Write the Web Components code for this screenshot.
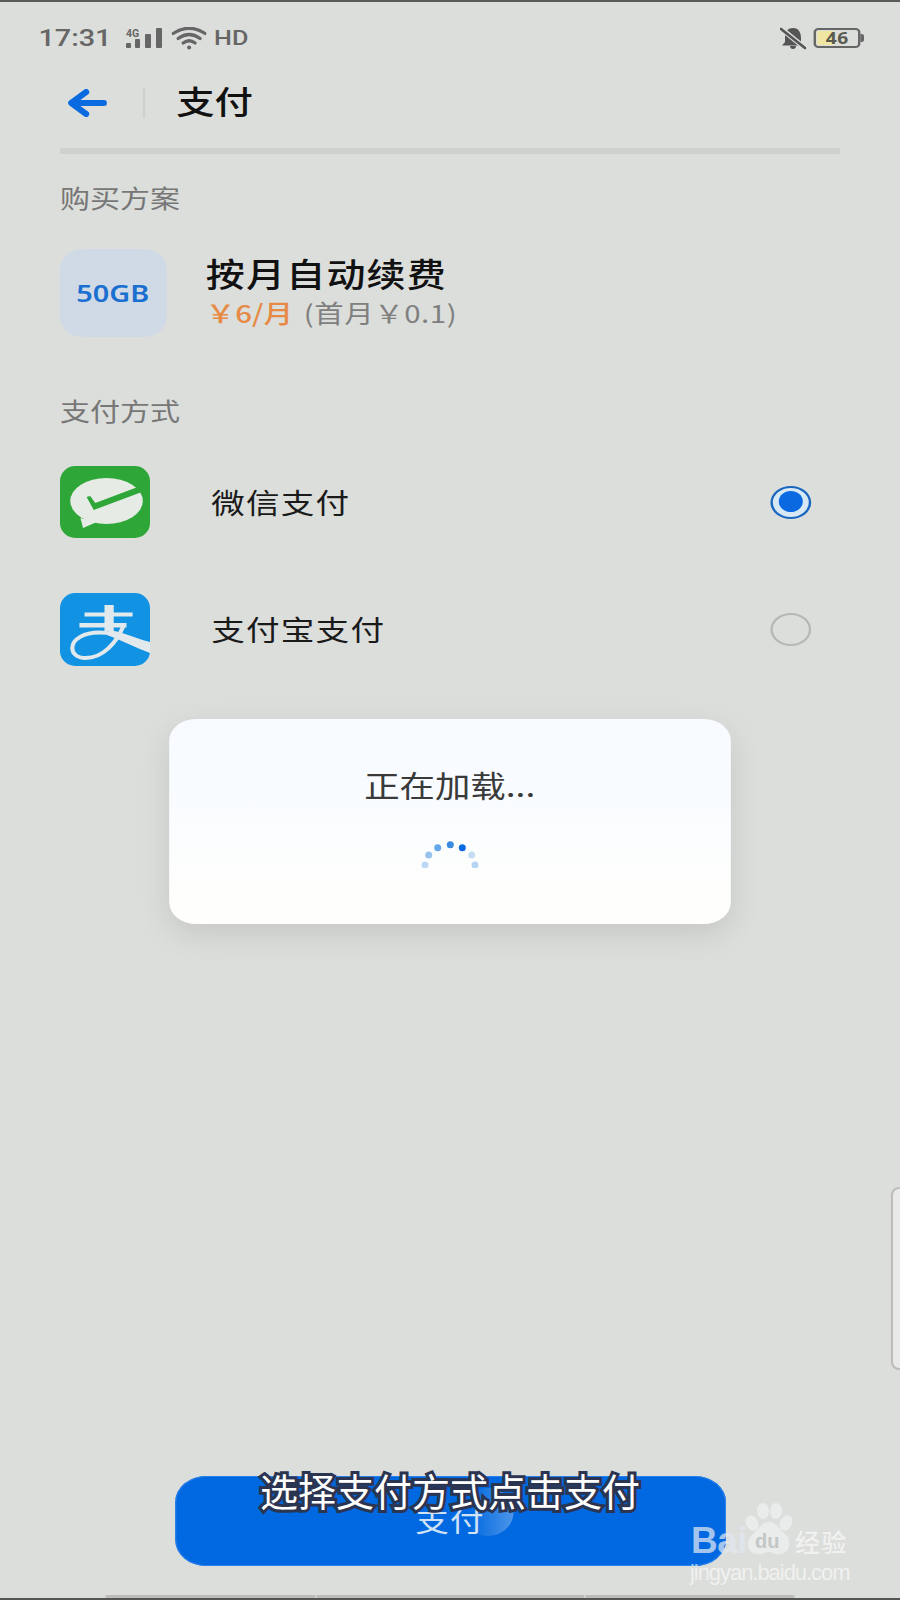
<!DOCTYPE html>
<html lang="zh-CN">
<head>
<meta charset="utf-8">
<title>支付</title>
<style>
html,body{margin:0;padding:0;background:#dcdedb;overflow:hidden}
body{font-family:"Noto Sans CJK SC","Noto Sans",sans-serif}
</style>
</head>
<body>
<x-screen>
  <x-app>
    <x-status-bar></x-status-bar>
    <x-nav-bar>支付</x-nav-bar>
    <x-section-title style="margin-top:26px">购买方案</x-section-title>
    <x-plan name="按月自动续费" price="￥6/月" note="(首月￥0.1)" badge="50GB"></x-plan>
    <x-section-title style="margin-top:56px">支付方式</x-section-title>
    <x-pay-row checked style="margin-top:39px">
      <svg slot="icon" viewBox="0 0 88 72" preserveAspectRatio="none" style="width:75px;height:72px;display:block">
        <rect width="88" height="72" rx="15" fill="#2ea738"/>
        <ellipse cx="45.5" cy="35" rx="35.5" ry="23" fill="#e6ebe6"/>
        <path d="M20 52 L22.5 62 L36 56Z" fill="#e6ebe6"/>
        <path d="M26 31 L29.5 30 L34.5 37 L76 21 L80 26 L33 44Z" fill="#2ea738"/>
      </svg>
      微信支付
    </x-pay-row>
    <x-pay-row style="margin-top:55px">
      <svg slot="icon" viewBox="0 0 88 73" preserveAspectRatio="none" style="width:75px;height:73px;display:block">
        <rect width="88" height="73" rx="15" fill="#1192e2"/>
        <g fill="#e2e9ec">
          <rect x="43.5" y="12" width="9" height="26"/>
          <rect x="24" y="19.5" width="47" height="4"/>
          <rect x="19" y="30" width="46" height="4.5"/>
          <path d="M48 37 C62 39 76 46 88 49 L88 60 C74 55 60 47 46 42Z"/>
        </g>
        <path d="M62 33 C55 50 42 65 25 65 C16 65 12 60 12 55 C12 46 24 39.5 38 39.5 C44 39.5 48 40 52 41" fill="none" stroke="#e2e9ec" stroke-width="4"/>
      </svg>
      支付宝支付
    </x-pay-row>
    <x-loading-dialog>正在加载...</x-loading-dialog>
    <x-pay-button>支付</x-pay-button>
    <x-bottom-bar></x-bottom-bar>
  </x-app>
  <x-side-tab></x-side-tab>
  <x-caption>选择支付方式点击支付</x-caption>
  <x-watermark></x-watermark>
</x-screen>
<script>
function def(name, css, html){
  customElements.define(name, class extends HTMLElement{
    constructor(){
      super();
      const r=this.attachShadow({mode:'open'});
      const h=typeof html==='function'?html(this):html;
      r.innerHTML='<style>'+css+'</style>'+h;
    }
  });
}
def('x-screen',':host{display:block;position:relative;width:900px;height:1600px;overflow:hidden;background:#dcdedb}','<slot></slot>');
def('x-app',':host{display:flex;flex-direction:column;width:750px;height:1600px;transform:scaleX(1.2);transform-origin:0 0;position:relative;font-family:"Noto Sans CJK SC","Noto Sans",sans-serif}','<slot></slot>');
def('x-status-bar',`:host{display:flex;align-items:center;height:72px;border-top:2px solid #5a5c5a;padding:0 33.5px 0 32px;color:#666;flex:none}
.t{font:500 24px/1 Roboto,sans-serif;margin-right:12px}
.hd{font:500 21px/1 Roboto,sans-serif;margin-left:6px}
svg{display:block;flex:none}
.r{margin-left:auto;display:flex;align-items:center;gap:6.5px}
.bat{position:relative;width:38.5px;height:20px;box-sizing:border-box;border:2px solid #666;border-radius:4px;display:flex;align-items:center;justify-content:center;font:700 16px/1 "Noto Sans",sans-serif;color:#5a5a4e;letter-spacing:.5px}
.bat i{position:absolute;left:1px;top:1px;bottom:1px;width:15px;background:linear-gradient(90deg,#f0e6a4 75%,#e6e3c0);border-radius:1px}
.bat b{position:relative;font-weight:700;margin-left:1px}
.bat u{position:absolute;right:-5px;top:4px;width:2.5px;height:8px;background:#666;border-radius:0 2px 2px 0}`,
`<span class="t">17:31</span>
<svg viewBox="0 0 36 20" preserveAspectRatio="none" style="width:30px;height:20px;margin-right:8.3px">
  <text x="0" y="8.5" font-family="Roboto,sans-serif" font-weight="700" font-size="10.5" fill="#666">4G</text>
  <rect x="0" y="15" width="5" height="5" rx="1" fill="#666"/><rect x="9" y="11" width="5" height="9" rx="1" fill="#666"/>
  <rect x="19" y="6" width="6" height="14" rx="1" fill="#666"/><rect x="30" y="0" width="6" height="20" rx="1" fill="#666"/>
</svg>
<svg viewBox="0 0 35 23" preserveAspectRatio="none" style="width:29.2px;height:23px" fill="none" stroke="#666" stroke-width="3.2" stroke-linecap="round">
  <path d="M1.5 6.5 Q17.5 -4 33.5 6.5"/><path d="M6.5 11.5 Q17.5 3.5 28.5 11.5"/><path d="M11.5 16 Q17.5 11.5 23.5 16"/>
  <circle cx="17.5" cy="20.5" r="2" fill="#666" stroke="none"/>
</svg>
<span class="hd">HD</span>
<div class="r">
<svg viewBox="0 0 26 23" preserveAspectRatio="none" style="width:21.7px;height:23px">
  <path d="M13 1 C7 1 5 6 5 11 V15 L2 18.5 H24 L21 15 V11 C21 6 19 1 13 1Z" fill="#555"/>
  <path d="M10 19 a3 3 0 0 0 6 0Z" fill="#555"/>
  <path d="M1 1.5 L25 21" stroke="#dcdedb" stroke-width="5"/>
  <path d="M1 2 L25 21" stroke="#555" stroke-width="2.6" stroke-linecap="round"/>
</svg>
<div class="bat"><i></i><b>46</b><u></u></div>
</div>`);
def('x-nav-bar',`:host{display:flex;align-items:center;height:58px;flex:none;border-bottom:6px solid #cfd1ce;margin:0 50px;padding:0 0 16px;position:relative;box-sizing:content-box}
svg{display:block;width:33.3px;height:28px;margin-left:6px;flex:none}
.s{width:2px;height:30px;background:#cfd1ce;margin:0 0 0 29.5px;flex:none}
.t{font-size:32px;line-height:1;margin:0 0 6px 26px;color:#111;font-weight:500}`,
`<svg viewBox="0 0 40 28" preserveAspectRatio="none" fill="none" stroke="#0a6be0" stroke-width="6" stroke-linecap="round" stroke-linejoin="round"><path d="M19 3 L4 14 L19 25"/><path d="M5 14 H37"/></svg><div class="s"></div><div class="t"><slot></slot></div>`);
def('x-section-title',':host{display:block;margin-left:50px;font-size:25px;line-height:34px;color:#777;flex:none}','<slot></slot>');
def('x-plan',`:host{display:flex;align-items:flex-start;margin:35px 0 0 49.5px;height:88px;flex:none}
.b{width:89px;height:88px;border-radius:20px;background:#cfdae6;color:#1a6fd0;font:600 24px/88px "Noto Sans",sans-serif;text-align:center;flex:none}
.c{margin-left:33px;display:flex;flex-direction:column;padding-top:6px}
.n{font-size:32.5px;line-height:36px;font-weight:500;color:#111;letter-spacing:1px}
.p{font-size:24.5px;line-height:30px;color:#808080;margin-top:7px}
.p b{font-weight:500;color:#e68a45;margin-right:9px}
.p span{letter-spacing:.5px}`,
h=>`<div class="b">${h.getAttribute('badge')}</div><div class="c"><div class="n">${h.getAttribute('name')}</div><div class="p"><b>${h.getAttribute('price')}</b><span>${h.getAttribute('note')}</span></div></div>`);
def('x-radio',`:host{display:block;width:34px;height:33px;box-sizing:border-box;border-radius:50%;flex:none;position:relative;border:2.5px solid #b6b8b5}
:host([on]){border-color:#1a66c0;background:#d6e7f6}
:host([on])::after{content:"";position:absolute;left:4.5px;top:3.5px;width:20px;height:21px;border-radius:50%;background:#0a68e0}`,'');
def('x-pay-row',`:host{display:flex;align-items:center;margin-left:50px;height:72px;flex:none;padding-right:74px}
.i{width:75px;flex:none}
.l{margin-left:51px;font-size:28px;letter-spacing:1px;color:#1a1a1a;flex:1}`,
h=>`<div class="i"><slot name="icon"></slot></div><div class="l"><slot></slot></div><x-radio ${h.hasAttribute('checked')?'on':''}></x-radio>`);
def('x-spinner',`:host{display:block;width:50px;height:28px}svg{display:block;width:50px;height:28px}`,
`<svg viewBox="0 0 60 28" preserveAspectRatio="none">
<circle cx="5" cy="25" r="3.5" fill="#bdd8f4"/>
<circle cx="8.7" cy="15" r="3.5" fill="#97c2ee"/>
<circle cx="17.7" cy="7.7" r="3.5" fill="#64a8ea"/>
<circle cx="30.3" cy="4.7" r="3.5" fill="#3a8ae0"/>
<circle cx="42.3" cy="7.7" r="3.5" fill="#0a68e0"/>
<circle cx="51.7" cy="15" r="3.5" fill="#c5dcf3"/>
<circle cx="55" cy="25" r="3.5" fill="#b5d5f5"/>
</svg>`);
def('x-loading-dialog',`:host{position:absolute;left:141px;top:719px;width:467.5px;height:205px;box-sizing:border-box;border-radius:22px;background:linear-gradient(#f7fbff,#f9fcff 40%,#fefefc 85%);box-shadow:0 10px 28px rgba(0,0,0,.1);display:flex;flex-direction:column;align-items:center;padding-top:45px}
.t{font-size:29.5px;line-height:40px;color:#3a3a3a;height:40px}
x-spinner{margin-top:36px}`,'<div class="t"><slot></slot></div><x-spinner></x-spinner>');
def('x-pay-button',`:host{display:block;position:relative;flex:none;margin:auto 0 0 145.5px;width:459px;height:90px;border-radius:26px;background:#0068e0;box-shadow:0 0 0 1px #2a80ea inset;overflow:hidden}
.r{position:absolute;left:239px;top:12px;width:43px;height:48px;border-radius:50%;background:linear-gradient(90deg,rgba(255,255,255,0) 15%,rgba(255,255,255,.3))}
.t{position:relative;display:block;text-align:center;font-size:28px;line-height:88px;color:#cfe2f6;letter-spacing:1px}`,
'<div class="r"></div><span class="t"><slot></slot></span>');
def('x-bottom-bar',`:host{display:block;flex:none;margin-top:29px;height:3px;border-bottom:2px solid #555;position:relative}
.s{display:flex;gap:1px;margin-left:87.5px;width:574px;height:3px}
.s i{background:#bcbdbb;height:3px}`,'<div class="s"><i style="width:175px"></i><i style="width:223px"></i><i style="width:174px"></i></div>');
def('x-side-tab',`:host{position:absolute;right:-8px;top:1187px;width:17px;height:183px;box-sizing:border-box;background:#e8e9e8;border:2px solid #bcbdbb;border-radius:8px}`,'');
def('x-caption',`:host{position:absolute;left:0;width:900px;top:1465px;text-align:center;font:400 38px/50px "Noto Sans CJK SC",sans-serif;color:#fff;-webkit-text-stroke:6px #2b3450;paint-order:stroke fill}`,'<slot></slot>');
def('x-watermark',`:host{position:absolute;left:688px;top:1500px;width:170px;height:84px}
.bai{position:absolute;left:3px;top:21px;font:700 37px/40px "Liberation Sans",sans-serif;letter-spacing:-.5px;color:rgba(226,233,243,.72)}
svg{position:absolute;left:56px;top:3px;width:49px;height:53px;opacity:.8}
.du{position:absolute;left:67px;top:30px;font:700 20px/22px "Liberation Sans",sans-serif;color:#c3c7c6}
.jy{position:absolute;left:107px;top:27px;font:500 25px/28px "Noto Sans CJK SC",sans-serif;color:rgba(255,255,255,.6);letter-spacing:1.5px}
.u{position:absolute;left:2px;top:60px;font:400 22px/26px "Liberation Sans",sans-serif;letter-spacing:-1.05px;color:rgba(255,255,255,.6);white-space:nowrap}`,
`<span class="bai">Bai</span>
<svg viewBox="0 0 49 53" preserveAspectRatio="none" fill="#eef0ef"><ellipse cx="8" cy="20" rx="6" ry="8" transform="rotate(-25 8 20)"/><ellipse cx="19" cy="8" rx="6" ry="8"/><ellipse cx="32" cy="8" rx="6" ry="8"/><ellipse cx="42" cy="20" rx="6" ry="8" transform="rotate(25 42 20)"/><path d="M25 19 C33 19 36 27 42 32 C48 38 46 50 36 51 C30 52 28 49 25 49 C21 49 19 52 13 51 C3 50 1 38 8 32 C14 27 17 19 25 19Z"/></svg>
<span class="du">du</span><span class="jy">经验</span><span class="u">jingyan.baidu.com</span>`);
</script>
</body>
</html>
